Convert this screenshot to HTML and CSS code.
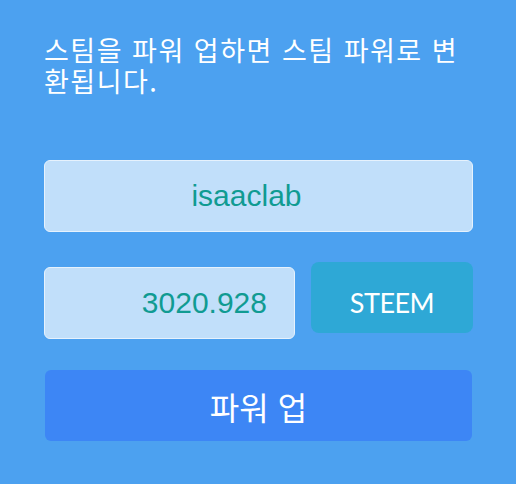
FILE: index.html
```html
<!DOCTYPE html>
<html lang="ko">

<head>
    <meta charset="UTF-8">
    <meta name="viewport" content="width=device-width, initial-scale=1.0">
    <title>파워 업</title>
    <link rel="stylesheet" href="styles.css">
</head>

<body>
    <div class="panel">
        <p class="intro">스팀을 파워 업하면 스팀 파워로 변환됩니다.</p>

        <form id="powerForm">
            <input type="text" id="account" class="field field-account" value="isaaclab">

            <div class="amount-row">
                <input type="text" id="amount" class="field field-amount" value="3020.928">
                <button type="button" class="unit">STEEM</button>
            </div>

            <button type="submit" class="submit">파워 업</button>
        </form>
    </div>
</body>

</html>
```

FILE: styles.css
```css
body {
    margin: 0;
    background-color: #4ca1f0;
    font-family: "Liberation Sans", "Noto Sans CJK KR", sans-serif;
}

.panel {
    width: 429px;
    padding: 34px 0 0 44px;
}

.intro {
    margin: 0;
    color: #fff;
    font-family: "Noto Sans CJK KR", sans-serif;
    font-size: 27px;
    line-height: 31px;
    letter-spacing: 1.5px;
}

form {
    margin-top: 64px;
}

.field {
    display: block;
    box-sizing: border-box;
    height: 72px;
    margin: 0;
    background-color: #c1dffa;
    border: 1px solid #e6f2fd;
    border-radius: 6px;
    color: #109b92;
    font-family: "Liberation Sans", sans-serif;
    font-size: 30px;
    outline: none;
}

.field-account {
    width: 429px;
    padding: 0 24px 0 0;
    text-align: center;
}

.amount-row {
    display: flex;
    align-items: flex-start;
    gap: 16px;
    margin-top: 30px;
}

.field-amount {
    width: 251px;
    margin-top: 5px;
    padding-right: 27px;
    text-align: right;
}

.unit {
    width: 162px;
    height: 71px;
    padding-top: 10px;
    background-color: #2ea8d6;
    border: none;
    border-radius: 8px;
    color: #fff;
    font-family: Lato, sans-serif;
    font-size: 27px;
    letter-spacing: -0.5px;
    cursor: pointer;
}

.submit {
    display: block;
    width: 427px;
    height: 71px;
    margin: 31px 0 0 1px;
    background-color: #3d86f5;
    border: none;
    border-radius: 6px;
    color: #fff;
    font-family: "Noto Sans CJK KR", sans-serif;
    font-size: 32px;
    cursor: pointer;
}
```
